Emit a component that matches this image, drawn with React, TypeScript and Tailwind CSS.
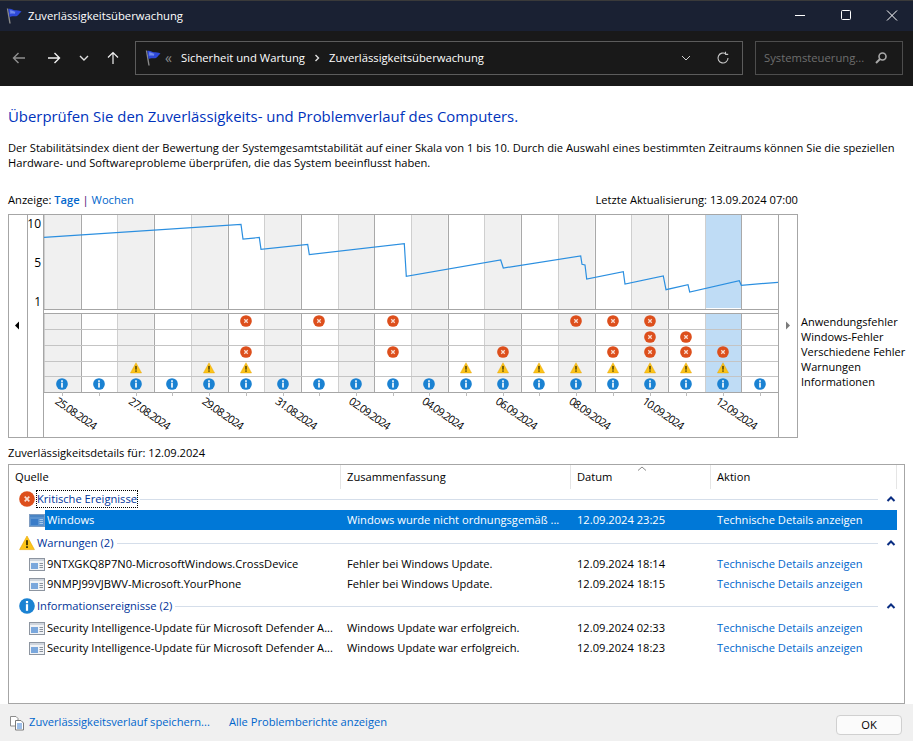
import React from "react";

const FONT = "font-['Open_Sans','Noto_Sans',sans-serif]";

function Flag({ className = "" }: { className?: string }) {
  return (
    <svg width="16" height="16" viewBox="0 0 16 16" className={className}>
      <path d="M1.5 .5 L4 15.5" stroke="#8a8a8a" strokeWidth="1.4" />
      <path d="M2.3 1 C5 0 7 2 9 2.2 C11 2.4 13 2.2 15.5 3.6 C13.5 5 13 7 11 8 C9 9 6 7.4 3.6 9 Z" fill="#2d48d8" />
      <path d="M4 2.4 C6 2 7.5 3.6 9.5 3.8 L8.5 6 C7 5.4 5.5 5.6 4.4 6 Z" fill="#7089ec" />
    </svg>
  );
}

function ErrorIcon({ size = 16 }: { size?: number }) {
  return (
    <svg width={size} height={size} viewBox="0 0 16 16">
      <circle cx="8" cy="8" r="7.8" fill="#dd4f1c" />
      <path d="M5.7 5.7 L10.3 10.3 M10.3 5.7 L5.7 10.3" stroke="#f8ddd2" strokeWidth="1.7" />
    </svg>
  );
}
function WarnIcon({ size = 16 }: { size?: number }) {
  return (
    <svg width={size} height={size} viewBox="0 0 16 16">
      <path d="M8 1 L15.4 14.6 H.6 Z" fill="#fcc419" stroke="#e8a400" strokeWidth=".6" strokeLinejoin="round" />
      <rect x="7.1" y="5.2" width="1.8" height="5" fill="#3a3000" />
      <rect x="7.1" y="11.2" width="1.8" height="1.8" fill="#3a3000" />
    </svg>
  );
}
function InfoIcon({ size = 16 }: { size?: number }) {
  return (
    <svg width={size} height={size} viewBox="0 0 16 16">
      <circle cx="8" cy="8" r="7.8" fill="#1b82d2" />
      <rect x="6.9" y="3" width="2.2" height="2.2" fill="#fff" />
      <rect x="6.9" y="6.2" width="2.2" height="6.6" fill="#fff" />
    </svg>
  );
}
function AppIcon({ selected = false }: { selected?: boolean }) {
  return (
    <svg width="16" height="13" viewBox="0 0 16 13" className="shrink-0">
      <rect x=".5" y=".5" width="15" height="12" fill={selected ? "#5b93d0" : "#f1f3f6"} stroke={selected ? "#7f9cc0" : "#8d95a0"} />
      <rect x="1" y="1" width="14" height="2" fill={selected ? "#4a85c4" : "#cfd5dd"} />
      <rect x="2" y="5" width="7" height="6" fill={selected ? "#3a7cc8" : "#7aa7dc"} />
      <path d="M10.5 5.5h3.5M10.5 7.5h3.5M10.5 9.5h3.5" stroke={selected ? "#a8c8ea" : "#8a929c"} />
    </svg>
  );
}

const X0 = 44;
const W = 36.7;
const cx = (i: number) => X0 + W * (i + 0.5);
const vx = (i: number) => Math.round(X0 + W * i);
const rows = [313, 329, 345, 361, 376, 392];
const iconY = [321, 337, 352, 368, 384];
const errs: [number, number[]][] = [
  [0, [5, 7, 9, 14, 15, 16]],
  [1, [16, 17]],
  [2, [5, 9, 12, 15, 16, 17, 18]],
];
const warns = [2, 4, 5, 11, 12, 13, 14, 15, 16, 17, 18];
const dates = ["25.08.2024", "27.08.2024", "29.08.2024", "31.08.2024", "02.09.2024", "04.09.2024", "06.09.2024", "08.09.2024", "10.09.2024", "12.09.2024"];
const line =
  "44,237.3 241,224.3 243,239 259.3,237.5 261,249.3 307.7,244.3 309.3,254.7 404.3,243.7 406.3,276.3 500.7,260 503.3,268 580.7,256 582,264.3 585,265 586.7,279 623.3,271.7 625,284 663.3,276 666,289.7 688,284.7 689.7,292 739.3,280.7 741.3,285.3 778,282.3";

function Chart() {
  return (
    <svg width="800" height="226" viewBox="8 213 800 226" className="block" style={{ fontFamily: "'Open Sans','Noto Sans',sans-serif" }}>
      <rect x="8.5" y="214.5" width="789" height="223" fill="#fff" stroke="#a6a6a6" />
      {Array.from({ length: 20 }, (_, i) =>
        i % 2 === 0 && i !== 18 ? (
          <g key={i}>
            <rect x={vx(i)} y="215" width={W} height="94" fill="#f0f0f0" />
            <rect x={vx(i)} y="313" width={W} height="79" fill="#f0f0f0" />
          </g>
        ) : null,
      )}
      <rect x="706" y="215" width="36" height="93" fill="#bfdcf5" />
      <rect x="706" y="314" width="36" height="78" fill="#bfdcf5" />
      {Array.from({ length: 21 }, (_, i) => (
        <g key={i} stroke={i % 2 === 0 ? "#cfcfcf" : "#a9a9a9"}>
          <line x1={vx(i) + 0.5} x2={vx(i) + 0.5} y1="215" y2="309" />
          <line x1={vx(i) + 0.5} x2={vx(i) + 0.5} y1="313" y2="392" />
        </g>
      ))}
      <path d="M27.5 215V438M43.5 215V438M778.5 215V438" stroke="#a6a6a6" />
      <path d="M44 309.5H778M44 313.5H778M44 392.5H778" stroke="#a6a6a6" />
      {rows.slice(1, 5).map((y) => (
        <line key={y} x1="44" x2="778" y1={y + 0.5} y2={y + 0.5} stroke="#c4c4c4" />
      ))}
      <polyline points={line} fill="none" stroke="#2b8fe0" strokeWidth="1.2" />
      <g fontSize="12" fill="#000" textAnchor="end">
        <text x="41" y="228">10</text>
        <text x="41" y="267">5</text>
        <text x="41" y="306">1</text>
      </g>
      <path d="M15 325.5L19 321.5V329.5Z" fill="#000" />
      <path d="M786 321.5V329.5L790 325.5Z" fill="#7a7a7a" />
      {Array.from({ length: 20 }, (_, i) => (
        <line key={i} x1={Math.round(cx(i)) + 0.5} x2={Math.round(cx(i)) + 0.5} y1="392" y2="396" stroke="#bdbdbd" />
      ))}
      {errs.flatMap(([r, cols]) =>
        cols.map((c) => (
          <g key={`${r}-${c}`} transform={`translate(${Math.round(cx(c)) - 6},${iconY[r] - 6})`}>
            <ErrorIcon size={12} />
          </g>
        )),
      )}
      {warns.map((c) => (
        <g key={c} transform={`translate(${Math.round(cx(c)) - 6},${iconY[3] - 6})`}>
          <WarnIcon size={12} />
        </g>
      ))}
      {Array.from({ length: 20 }, (_, i) => (
        <g key={i} transform={`translate(${Math.round(cx(i)) - 6},${iconY[4] - 6})`}>
          <InfoIcon size={12} />
        </g>
      ))}
      {dates.map((d, i) => {
        const x = cx(i * 2) - 8;
        return (
          <text key={d} x={x} y="403" fontSize="11" letterSpacing="-0.9" fill="#000" transform={`rotate(35 ${x} 403)`}>
            {d}
          </text>
        );
      })}
    </svg>
  );
}

function GroupRow({ icon, label, focus = false, mt }: { icon: React.ReactNode; label: string; focus?: boolean; mt: string }) {
  return (
    <div className={`flex h-[16px] items-center ${mt}`}>
      <div className="ml-[9px] flex w-[18px] justify-center">{icon}</div>
      <span className={`ml-[1px] h-[16px] whitespace-nowrap leading-[15px] text-[#003399] ${focus ? "outline-1 outline-dotted outline-black" : ""}`}>{label}</span>
      <div className="ml-[3px] mr-[8px] h-px flex-1 bg-[#d5deea]" />
      <svg width="10" height="6" viewBox="0 0 10 6" className="mr-[8px]">
        <path d="M1.5 5 L5 1.5 L8.5 5" fill="none" stroke="#0a2d82" strokeWidth="2" />
      </svg>
    </div>
  );
}

function Row({ src, sum, date, selected = false, top }: { src: string; sum: string; date: string; selected?: boolean; top: string }) {
  return (
    <div className={`mr-[7px] flex h-[20px] items-center ${top}`}>
      <div className="ml-[20px]">
        <AppIcon selected={selected} />
      </div>
      <div className={`flex h-full flex-1 items-center leading-[20px] ${selected ? "bg-[#0078d7] text-white" : "text-black"}`}>
        <span className="ml-[2px] w-[300px] whitespace-nowrap">{src}</span>
        <span className="w-[230px] whitespace-nowrap">{sum}</span>
        <span className="w-[140px] whitespace-nowrap">{date}</span>
        <span className={`whitespace-nowrap ${selected ? "text-white" : "text-[#0066cc]"}`}>Technische Details anzeigen</span>
      </div>
    </div>
  );
}

export default function App() {
  return (
    <div className={`flex h-[741px] w-[913px] flex-col overflow-hidden bg-white text-[11.15px] text-black ${FONT}`}>
      {/* Title bar */}
      <div className="flex h-[31px] items-center border-t border-[#3a3a3a] bg-[#1a2133] text-white">
        <Flag className="ml-[6px]" />
        <span className="ml-[6px] mt-[1px] text-[11.25px]">Zuverlässigkeitsüberwachung</span>
        <div className="ml-auto flex items-center">
          <svg width="46" height="30" viewBox="0 0 46 30"><path d="M20 14.5H30" stroke="#fff" /></svg>
          <svg width="46" height="30" viewBox="0 0 46 30"><rect x="20.5" y="9.5" width="9" height="9" rx="1" fill="none" stroke="#fff" /></svg>
          <svg width="46" height="30" viewBox="0 0 46 30"><path d="M20 9.5L30 19.5M30 9.5L20 19.5" stroke="#fff" /></svg>
        </div>
      </div>
      {/* Nav bar */}
      <div className="flex h-[55px] items-center bg-[#191919] pb-[1px] text-[11.25px] text-white">
        <svg width="16" height="16" viewBox="0 0 16 16" className="ml-[11px]"><path d="M14 8H2.5M7.5 3L2.5 8L7.5 13" fill="none" stroke="#8f8f8f" strokeWidth="1.4" /></svg>
        <svg width="16" height="16" viewBox="0 0 16 16" className="ml-[19px]"><path d="M2 8H13.5M8.5 3L13.5 8L8.5 13" fill="none" stroke="#f0f0f0" strokeWidth="1.4" /></svg>
        <svg width="10" height="8" viewBox="0 0 10 8" className="ml-[17px]"><path d="M1 2L5 6L9 2" fill="none" stroke="#e0e0e0" strokeWidth="1.4" /></svg>
        <svg width="16" height="16" viewBox="0 0 16 16" className="ml-[16px]"><path d="M8 14V2.5M3 7.5L8 2.5L13 7.5" fill="none" stroke="#f0f0f0" strokeWidth="1.2" /></svg>
        <div className="ml-[14px] flex h-[34px] w-[608px] items-center border border-[#5c5c5c]">
          <Flag className="ml-[9px]" />
          <span className="ml-[4px] w-[16px] text-[14px] leading-none text-[#8a8a8a]">«</span>
          <span className="whitespace-nowrap">Sicherheit und Wartung</span>
          <svg width="6" height="8" viewBox="0 0 6 8" className="ml-[9px]"><path d="M1.5 1L4.5 4L1.5 7" fill="none" stroke="#e0e0e0" strokeWidth="1.4" /></svg>
          <span className="ml-[9px] whitespace-nowrap">Zuverlässigkeitsüberwachung</span>
          <svg width="10" height="6" viewBox="0 0 10 6" className="ml-auto"><path d="M1 1L5 5L9 1" fill="none" stroke="#d0d0d0" /></svg>
          <svg width="14" height="14" viewBox="0 0 14 14" className="ml-[25px] mr-[12px]"><path d="M12 7A5 5 0 1 1 10 3M9.5 .8V3.4H12.2" fill="none" stroke="#c8c8c8" strokeWidth="1.1" /></svg>
        </div>
        <div className="ml-[12px] flex h-[34px] w-[148px] items-center border border-[#4d4d4d] text-[#6e6e6e]">
          <span className="ml-[8px] whitespace-nowrap">Systemsteuerung...</span>
          <svg width="14" height="14" viewBox="0 0 14 14" className="ml-auto mr-[14px]"><circle cx="8.5" cy="5.5" r="3.5" fill="none" stroke="#a8a8a8" strokeWidth="1.6" /><path d="M6 8L2 12" stroke="#a8a8a8" strokeWidth="2" /></svg>
        </div>
      </div>

      {/* Content */}
      <div className="flex flex-1 flex-col">
        <h1 className="ml-[8px] mt-[20px] text-[14.9px] leading-[20px] font-normal text-[#0033bc]">Überprüfen Sie den Zuverlässigkeits- und Problemverlauf des Computers.</h1>
        <p className="ml-[8px] mt-[14px] whitespace-nowrap leading-[15px]">
          Der Stabilitätsindex dient der Bewertung der Systemgesamtstabilität auf einer Skala von 1 bis 10. Durch die Auswahl eines bestimmten Zeitraums können Sie die speziellen
          <br />
          Hardware- und Softwareprobleme überprüfen, die das System beeinflusst haben.
        </p>
        <div className="ml-[8px] mt-[22px] flex h-[16px] w-[790px] items-center justify-between leading-[16px]">
          <span>
            Anzeige: <b className="font-semibold text-[#0066cc]">Tage</b> <span className="text-[#401070]">|</span> <span className="text-[#0066cc]">Wochen</span>
          </span>
          <span>Letzte Aktualisierung: 13.09.2024 07:00</span>
        </div>
        <div className="relative mt-[5px] h-[226px]">
          <div className="ml-[8px]">
            <Chart />
          </div>
          <div className="absolute left-[801px] top-[101px] flex flex-col whitespace-nowrap text-[11px] leading-[15px]">
            <span>Anwendungsfehler</span>
            <span>Windows-Fehler</span>
            <span>Verschiedene Fehler</span>
            <span>Warnungen</span>
            <span>Informationen</span>
          </div>
        </div>
        <div className="ml-[8px] mt-[6px] h-[16px] leading-[16px]">Zuverlässigkeitsdetails für: 12.09.2024</div>
        <div className="relative mx-[8px] mt-[3px] h-[240px] border border-[#a6a6a6]">
          <div className="flex h-[24px] leading-[24px]">
            <div className="w-[332px] border-r border-[#e5e5e5] pl-[6px]">Quelle</div>
            <div className="w-[230px] border-r border-[#e5e5e5] pl-[6px]">Zusammenfassung</div>
            <div className="w-[140px] border-r border-[#e5e5e5] pl-[6px]">Datum</div>
            <div className="w-[186px] border-r border-[#e5e5e5] pl-[6px]">Aktion</div>
          </div>
          <svg width="10" height="5" viewBox="0 0 10 5" className="absolute left-[628px] top-[1px]"><path d="M1 4.5L5 1L9 4.5" fill="none" stroke="#8a8a8a" /></svg>
          <GroupRow mt="mt-[2px]" icon={<ErrorIcon size={16} />} label="Kritische Ereignisse" focus />
          <Row top="mt-[3px]" selected src="Windows" sum="Windows wurde nicht ordnungsgemäß ..." date="12.09.2024 23:25" />
          <GroupRow mt="mt-[5px]" icon={<WarnIcon size={16} />} label="Warnungen (2)" />
          <Row top="mt-[3px]" src="9NTXGKQ8P7N0-MicrosoftWindows.CrossDevice" sum="Fehler bei Windows Update." date="12.09.2024 18:14" />
          <Row top="" src="9NMPJ99VJBWV-Microsoft.YourPhone" sum="Fehler bei Windows Update." date="12.09.2024 18:15" />
          <GroupRow mt="mt-[4px]" icon={<InfoIcon size={16} />} label="Informationsereignisse (2)" />
          <Row top="mt-[4px]" src="Security Intelligence-Update für Microsoft Defender A..." sum="Windows Update war erfolgreich." date="12.09.2024 02:33" />
          <Row top="" src="Security Intelligence-Update für Microsoft Defender A..." sum="Windows Update war erfolgreich." date="12.09.2024 18:23" />
        </div>
        <div className="flex flex-1 items-center bg-[#f0f0f0]">
          <svg width="16" height="16" viewBox="0 0 16 16" className="ml-[9px]">
            <path d="M1.5 1.5H7L9 3.5V11H1.5Z" fill="#fff" stroke="#8c8c8c" />
            <path d="M6.5 5.5H12L14.5 8V15H6.5Z" fill="#fff" stroke="#7a7a7a" />
            <path d="M8 9H13M8 11H13M8 13H13" stroke="#3d7fd0" />
          </svg>
          <span className="ml-[4px] whitespace-nowrap text-[#0066cc]">Zuverlässigkeitsverlauf speichern...</span>
          <span className="ml-[19px] whitespace-nowrap text-[#0066cc]">Alle Problemberichte anzeigen</span>
          <button className="ml-auto mr-[11px] mt-[4px] h-[20px] w-[66px] rounded-[4px] border border-[#d0d0d0] bg-[#fbfbfb] leading-[18px]">OK</button>
        </div>
      </div>
    </div>
  );
}
